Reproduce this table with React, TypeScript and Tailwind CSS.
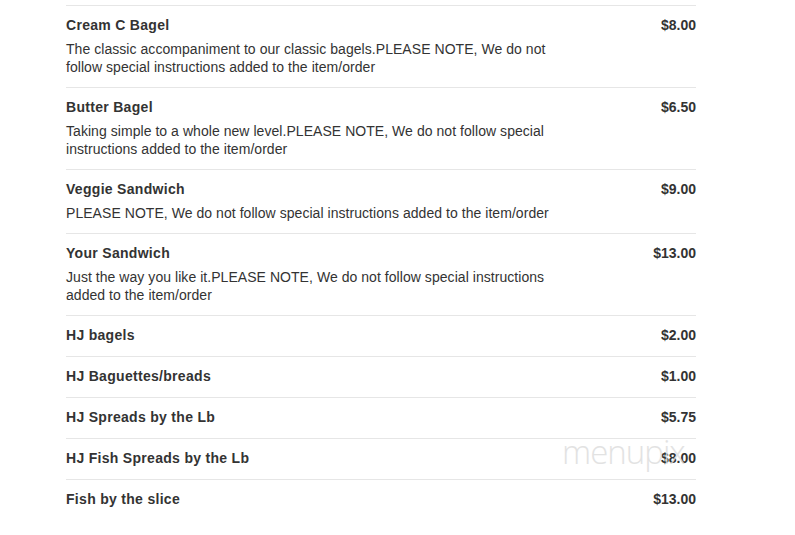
import React from 'react';

interface MenuItem {
    name: string;
    price: string;
    description?: string;
}

const NOTE = 'PLEASE NOTE, We do not follow special instructions added to the item/order';

const items: MenuItem[] = [
    { name: 'Cream C Bagel', price: '$8.00', description: 'The classic accompaniment to our classic bagels.' + NOTE },
    { name: 'Butter Bagel', price: '$6.50', description: 'Taking simple to a whole new level.' + NOTE },
    { name: 'Veggie Sandwich', price: '$9.00', description: NOTE },
    { name: 'Your Sandwich', price: '$13.00', description: 'Just the way you like it.' + NOTE },
    { name: 'HJ bagels', price: '$2.00' },
    { name: 'HJ Baguettes/breads', price: '$1.00' },
    { name: 'HJ Spreads by the Lb', price: '$5.75' },
    { name: 'HJ Fish Spreads by the Lb', price: '$8.00' },
    { name: 'Fish by the slice', price: '$13.00' },
];

const MenuRow: React.FC<{ item: MenuItem }> = ({ item }) => (
    <div className="border-t border-[#e6e6e6] pt-[10px] pb-[11px] flex justify-between">
        <div className="w-[500px]">
            <div className="text-[14px] leading-[19px] font-bold tracking-[0.3px] text-[#333]">{item.name}</div>
            {item.description && (
                <div className="mt-[5px] text-[14px] leading-[18px] tracking-[0.05px] text-[#333]">{item.description}</div>
            )}
        </div>
        <div className="text-[14px] leading-[19px] font-bold text-[#333]">{item.price}</div>
    </div>
);

export default function App() {
    return (
        <div className="relative w-[795px] h-[535px] bg-white overflow-hidden" style={{ fontFamily: '"Liberation Sans", Arial, sans-serif' }}>
            <div className="ml-[66px] w-[630px] pt-[5px]">
                {items.map((item, i) => (
                    <MenuRow key={i} item={item} />
                ))}
            </div>
            {/* watermark */}
            <div className="absolute left-[562px] top-[435px] text-[33px] leading-none tracking-[-1px] text-[#dcdcdc] opacity-80" style={{ fontFamily: '"Open Sans", sans-serif', fontWeight: 300 }}>
                menupix
            </div>
        </div>
    );
}
